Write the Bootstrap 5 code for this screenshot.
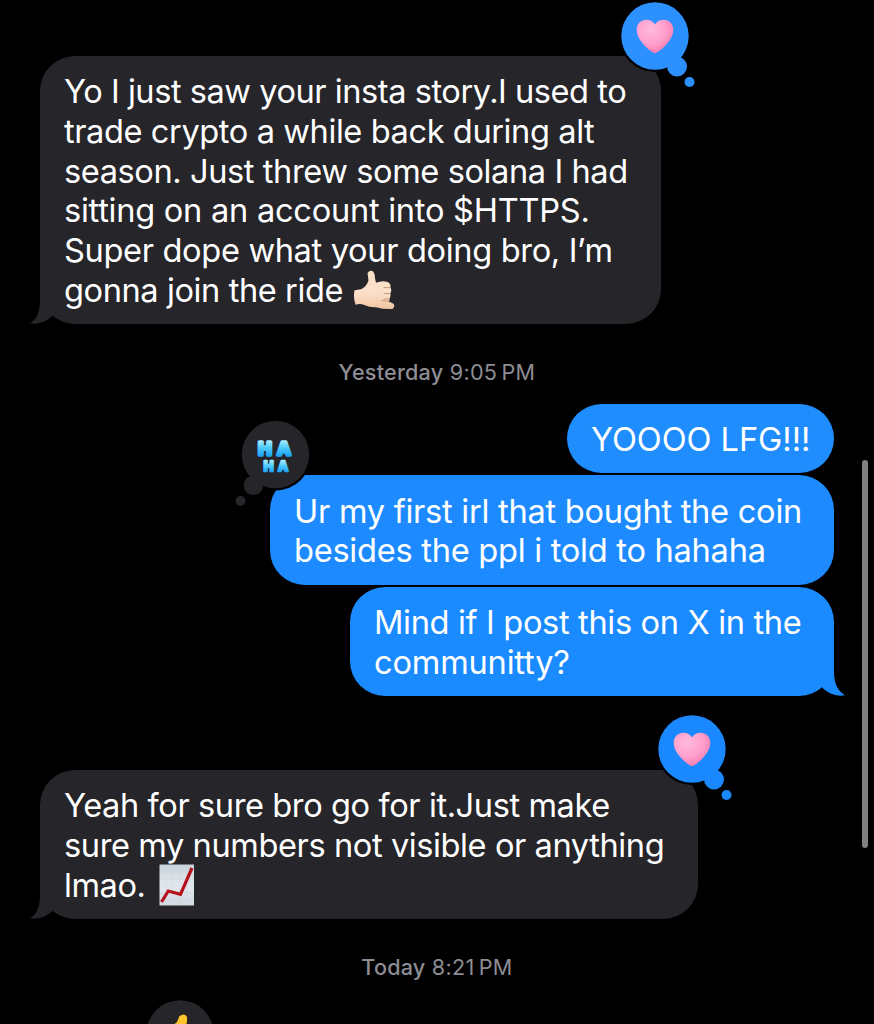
<!DOCTYPE html>
<html lang="en">
<head>
<meta charset="utf-8">
<meta name="viewport" content="width=device-width, initial-scale=1">
<title>Messages</title>
<link href="https://cdn.jsdelivr.net/npm/bootstrap@5.3.0/dist/css/bootstrap.min.css" rel="stylesheet">
<style>
html,body{height:1024px;overflow:hidden;background:#000}
body{font-family:Inter,"Liberation Sans",sans-serif;color:#fff}
.thread{height:1024px;padding:55.6px 40px 0;overflow:hidden}
.bubble{position:relative;padding:16.5px 24px 0;border-radius:35px;font-size:32.6px;line-height:39.8px;white-space:nowrap}
.bubble .line{display:block;height:39.8px}
.received{background:#26252a}
.sent{background:#1a8aff}
.tail{position:absolute;bottom:0;width:31px;height:34px}
.received .tail{left:-10px}
.sent .tail{right:-11px;transform:scaleX(-1)}
.b1{width:621px;height:268px}
.b2{width:267px;height:69.5px;margin-top:18px;background:#208dff}
.b3{width:564px;height:109.5px;margin-top:2px;background:#1d8bff}
.b4{width:484px;height:109.5px;margin-top:2px}
.b5{width:658px;height:149px;margin-top:73.6px}
.t08{letter-spacing:-.05px}
.t18{letter-spacing:-.18px}
.t27{letter-spacing:-.26px}
.t35{letter-spacing:-.34px}
.t40{letter-spacing:-.41px}
.t46{letter-spacing:-.46px}
.stamp{margin-top:34px;color:#8d8d93;font-size:21.6px;line-height:28px;letter-spacing:.3px;white-space:nowrap}
.stamp b{font-weight:500;letter-spacing:.2px}
.reaction{position:absolute;width:88px;height:94px}
.r1{left:578px;top:-57px}
.r3{left:-35px;top:-57px}
.r5{left:615px;top:-58px}
.r6{left:143px;top:997px}
.emoji{display:inline-block;vertical-align:top;overflow:visible}
.chart{margin:-2px 0 0 5px}
.haha{font-family:Inter,sans-serif;font-weight:700;stroke-linejoin:round;stroke-linecap:round}
.scroll-thumb{position:absolute;left:862px;top:460px;width:6px;height:388px;background:#808080}
</style>
</head>
<body>
<svg width="0" height="0" class="position-absolute">
  <defs>
    <radialGradient id="pink" cx=".38" cy=".3" r=".75"><stop stop-color="#ffb9dc"/><stop offset=".55" stop-color="#ffa0cd"/><stop offset="1" stop-color="#f777ad"/></radialGradient>
    <linearGradient id="skin" x2="0" y2="1"><stop stop-color="#fbe0c8"/><stop offset=".6" stop-color="#fbdfc8"/><stop offset="1" stop-color="#efc4a2"/></linearGradient>
    <linearGradient id="paper" x2="0" y2="1"><stop stop-color="#c9d3dc"/><stop offset=".5" stop-color="#e2e9ee"/><stop offset="1" stop-color="#d2dae2"/></linearGradient>
    <linearGradient id="aqua" x2="0" y2="1"><stop offset=".15" stop-color="#a5ecff"/><stop offset=".5" stop-color="#4dc8fc"/><stop offset=".85" stop-color="#1fa5f5"/></linearGradient>
    <g id="cloud"><circle cx="34" cy="34" r="33.7"/><circle cx="56" cy="64.5" r="10"/><circle cx="68.5" cy="80" r="5"/></g>
    <path id="heart" fill="url(#pink)" d="M34 51.2C31 51 15.7 39 15.7 28C15.7 17 28.5 14.500 34 22.300C39.5 14.500 52.3 17 52.3 28C52.3 39 37 51 34 51.2Z"/>
  </defs>
</svg>
<main class="thread position-relative d-flex flex-column align-items-start">
  <div class="bubble received b1">
    <svg class="tail" viewBox="0 0 31 34"><path fill="#26252a" d="M10 0V10C10 22 7 29 0 33.3C9 35 17 31 22.5 26L31 0Z"/></svg>
    <span class="line t46">Yo I just saw your insta story.I used to</span>
    <span class="line t40">trade crypto a while back during alt</span>
    <span class="line t40">season. Just threw some solana I had</span>
    <span class="line t27">sitting on an account into $HTTPS.</span>
    <span class="line t35">Super dope what your doing bro, I’m</span>
    <span class="line t40">gonna join the ride <svg class="emoji" width="42" height="40" viewBox="0 .8 42 40"><path fill="url(#skin)" d="M15.5 3Q17 -.5 20.500 .8Q23 3 23 8L24 12.500Q30 10 35 11.500Q39.500 13 38.300 17Q40.300 20 38.300 23Q39.300 26.500 37.500 28.500Q38 30.500 36.500 31L41.500 33.500Q43.500 36 40.500 38.700Q33 39.500 24 37Q18 37.500 13 35Q8 33 3.500 34.500Q1 27 2.500 20L9 19Q15 16 16.500 10Z"/><path fill="none" stroke="#c79a7c" stroke-width="1" stroke-linecap="round" d="M32 17.300L38 17.500M32 23.300H38M32 29L37 28.700M36.500 31L30 30.500"/></svg></span>
    <svg class="reaction r1" viewBox="-3 -3 88 94"><circle cx="34" cy="34" r="36" fill="#000"/><use href="#cloud" fill="#2c91ff"/><use href="#heart"/></svg>
  </div>

  <div class="stamp align-self-center"><b>Yesterday</b> 9:05&thinsp;PM</div>

  <div class="bubble sent b2 align-self-end"><span class="line t08">YOOOO LFG!!!</span></div>
  <div class="bubble sent b3 align-self-end">
    <span class="line t27">Ur my first irl that bought the coin</span>
    <span class="line t27">besides the ppl i told to hahaha</span>
    <svg class="reaction r3" viewBox="0 0 88 94"><circle cx="40.5" cy="36.5" r="36" fill="#000"/><g fill="#26252a"><circle cx="40.5" cy="36.5" r="33.7"/><circle cx="18.5" cy="67.3" r="9.8"/><circle cx="5.5" cy="83" r="5"/></g>
      <g class="haha" fill="url(#aqua)" stroke="url(#aqua)"><text x="23.3 42.3" y="36.5" font-size="18" stroke-width="3.6">HA</text><text x="28.7 43.3" y="53" font-size="13" stroke-width="2.6">HA</text></g>
    </svg>
  </div>
  <div class="bubble sent b4 align-self-end">
    <svg class="tail" viewBox="0 0 31 34"><path fill="#1a8aff" d="M11 0V10C11 22 7 29 0 33.3C9 35 17 31 22.5 26L31 0Z"/></svg>
    <span class="line t35">Mind if I post this on X in the</span>
    <span class="line t18">communitty?</span>
  </div>

  <div class="bubble received b5">
    <svg class="tail" viewBox="0 0 31 34"><path fill="#26252a" d="M10 0V10C10 22 7 29 0 33.3C9 35 17 31 22.5 26L31 0Z"/></svg>
    <span class="line t40">Yeah for sure bro go for it.Just make</span>
    <span class="line t40">sure my numbers not visible or anything</span>
    <span class="line t40">lmao. <svg class="emoji chart" width="36" height="42" viewBox="0 0 36 42"><path fill="url(#paper)" d="M.5 .5H35V41.5H.5Z"/><path stroke="#b4c0ca" stroke-width=".5" d="M7 1V41M14 1V41M21 1V41M28 1V41M1 8H35M1 15H35M1 22H35M1 29H35M1 36H35" opacity=".3"/><path fill="none" stroke="#b5121b" stroke-width="3.2" d="M2.5 38L9.3 27L21.5 30.3L33 4"/></svg></span>
    <svg class="reaction r5" viewBox="-3 -3 88 94"><circle cx="34" cy="34" r="36" fill="#000"/><use href="#cloud" fill="#1a88ff"/><use href="#heart"/></svg>
  </div>
  <div class="stamp align-self-center"><b>Today</b> 8:21&thinsp;PM</div>
  <svg class="reaction r6" viewBox="-3 -3 88 94"><circle cx="34" cy="34" r="33.7" fill="#26252a"/><path fill="#ffc42e" d="M33.500 16Q39 12.500 41 17Q41.500 23 39 28H50V40H24V28L31 22Z"/></svg>
  <div class="scroll-thumb rounded-pill"></div>
</main>
<script src="https://cdn.jsdelivr.net/npm/bootstrap@5.3.0/dist/js/bootstrap.bundle.min.js"></script>
</body>
</html>
